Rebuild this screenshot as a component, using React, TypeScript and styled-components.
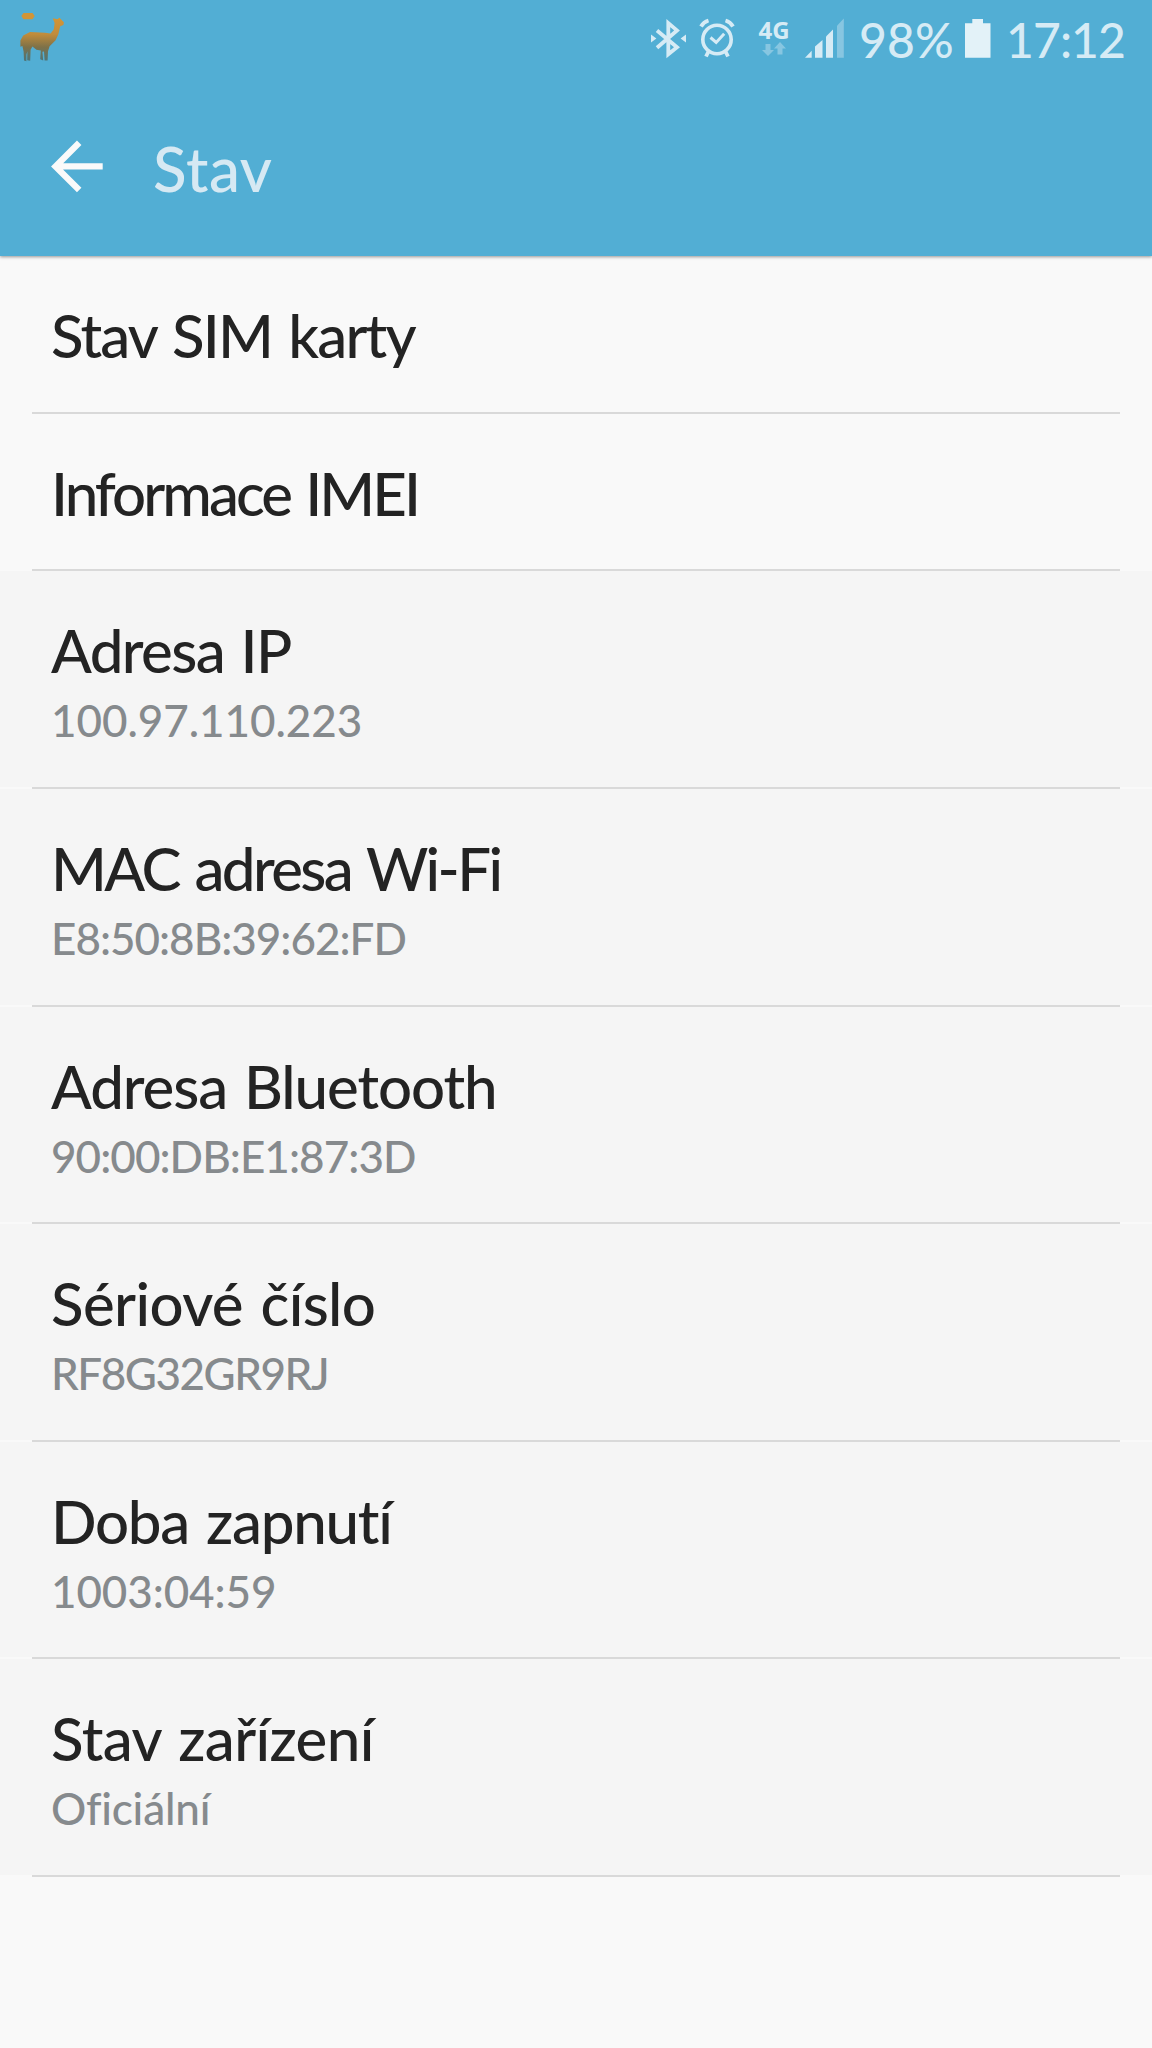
import React from "react";
import styled, { createGlobalStyle } from "styled-components";

const GlobalStyle = createGlobalStyle`
  body {
    margin: 0;
    background: #f9f9f9;
    font-family: Lato, "Open Sans", sans-serif;
    font-weight: 500;
  }
`;

const Screen = styled.div`
  width: 1152px;
  min-height: 2048px;
  background: #f9f9f9;
  overflow: hidden;
`;

const Header = styled.header`
  position: relative;
  height: 256px;
  background: #52aed4;
  box-shadow: 0 1px 3px rgba(0, 0, 0, 0.4);
`;

const StatusBar = styled.div`
  display: flex;
  align-items: flex-start;
  justify-content: space-between;
  height: 62px;
  padding: 10px 25px 0 18px;
  box-sizing: border-box;
  color: #d6ebf5;
`;

const StatusGroup = styled.div`
  display: flex;
  align-items: flex-start;
  padding-top: 8px;
`;

const Glyph = styled.svg<{ $w: number; $h?: number; $gap?: number }>`
  display: block;
  flex: none;
  width: ${(p) => p.$w}px;
  height: ${(p) => p.$h ?? 42}px;
  margin-left: ${(p) => p.$gap ?? 0}px;
`;

const StatusText = styled.span<{ $w: number; $gap: number; $spacing: number }>`
  width: ${(p) => p.$w}px;
  margin-left: ${(p) => p.$gap}px;
  font-size: 48px;
  line-height: 43px;
  letter-spacing: ${(p) => p.$spacing}px;
  white-space: nowrap;
`;

const Network = styled.div`
  display: flex;
  flex-direction: column;
  align-items: center;
  width: 34px;
  margin-left: 22px;
`;

const NetworkLabel = styled.span`
  font: 700 24px/24px "Open Sans", sans-serif;
`;

const ActionBar = styled.div`
  display: flex;
  align-items: center;
  height: 194px;
  padding: 0 0 0 50px;
  box-sizing: border-box;
`;

const BackButton = styled.button`
  display: block;
  padding: 0;
  border: 0;
  background: none;
  margin: 15px 0 0 0;
`;

const PageTitle = styled.h1`
  margin: 18px 0 0 49px;
  font-size: 62px;
  line-height: 74px;
  font-weight: 500;
  letter-spacing: 0.6px;
  color: #d6e9f3;
`;

const Row = styled.section<{ $height: number }>`
  display: flex;
  flex-direction: column;
  height: ${(p) => p.$height}px;
`;

const RowBody = styled.div<{ $muted?: boolean }>`
  flex: 1;
  padding: 43px 51px 0;
  background: ${(p) => (p.$muted ? "#f5f5f5" : "#f9f9f9")};
`;

const RowTitle = styled.div<{ $spacing: number }>`
  font-size: 60px;
  line-height: 72px;
  letter-spacing: ${(p) => p.$spacing}px;
  word-spacing: 3px;
  white-space: nowrap;
  color: #232323;
`;

const RowValue = styled.div<{ $spacing: number }>`
  margin-top: 8px;
  font-size: 44px;
  line-height: 52px;
  letter-spacing: ${(p) => p.$spacing}px;
  white-space: nowrap;
  color: #868a8d;
`;

const Divider = styled.div`
  height: 2px;
  margin: 0 32px;
  background: #d9d9d9;
`;

type Item = {
  title: string;
  titleSpacing: number;
  height: number;
  value?: string;
  valueSpacing?: number;
};

const items: Item[] = [
  { title: "Stav SIM karty", titleSpacing: -1.85, height: 158 },
  { title: "Informace IMEI", titleSpacing: -2.95, height: 157 },
  { title: "Adresa IP", titleSpacing: -1.6, height: 218, value: "100.97.110.223", valueSpacing: -0.05 },
  { title: "MAC adresa Wi-Fi", titleSpacing: -2.6, height: 218, value: "E8:50:8B:39:62:FD", valueSpacing: -1 },
  { title: "Adresa Bluetooth", titleSpacing: -1.1, height: 217, value: "90:00:DB:E1:87:3D", valueSpacing: -0.94 },
  { title: "Sériové číslo", titleSpacing: -0.6, height: 218, value: "RF8G32GR9RJ", valueSpacing: -1.45 },
  { title: "Doba zapnutí", titleSpacing: -1.25, height: 217, value: "1003:04:59", valueSpacing: -0.1 },
  { title: "Stav zařízení", titleSpacing: -0.6, height: 218, value: "Oficiální", valueSpacing: -0.2 },
];

const Llama = () => (
  <Glyph $w={50} $h={52} viewBox="18 10 50 52">
    <defs>
      <linearGradient id="fur" x1="0" y1="17" x2="0" y2="60" gradientUnits="userSpaceOnUse">
        <stop offset="0" stopColor="#d69633" />
        <stop offset="0.4" stopColor="#c08c3b" />
        <stop offset="0.7" stopColor="#7e7148" />
        <stop offset="1" stopColor="#4f7476" />
      </linearGradient>
    </defs>
    <path d="M23.5 13h9l2.2 3-2.2 3.2h-9L21.3 16z" fill="#d19537" />
    <path
      d="M52.7 18.3l4.8.9 2-1.4 1.6 1.6 2.8 2.8-.5 2.8-3.2 1.2-1.8 8-2.8 6-6 6-1.6 5-.4 9.4h-3l-.6-9-1.6.2.8 8.800-3-1.400.6-8.600-4.400-.8-4-3.400-1.800 3.400-.4 11-3-.6.2-9-1 3.400v6.600l-2.400-.8-.4-9-1.200-5.400-2 .8v-6.200l2.800-5.200 6.800-3.400 15 .8 5.600.6 3.200-4.200.8-6.200z"
      fill="url(#fur)"
    />
  </Glyph>
);

const Bluetooth = () => (
  <Glyph $w={36} viewBox="652 18 36 42">
    <path
      d="M658 30.5L678 47.3L669.3 54.2V23L678 30.4L658 47.7"
      fill="none"
      stroke="currentColor"
      strokeWidth="3.8"
    />
    <path d="M652 34.5v8l5.4-4zM687 34.5v8l-5.4-4z" fill="currentColor" />
  </Glyph>
);

const Alarm = () => (
  <Glyph $w={36} $gap={12} viewBox="700 18 36 42" fill="none" stroke="currentColor">
    <circle cx="718" cy="39.5" r="14.2" strokeWidth="3.6" />
    <path d="M702 26.5q2.5-4.5 7.5-6M734 26.5q-2.5-4.5-7.5-6" strokeWidth="3.8" />
    <path d="M709.5 51.5l-2.5 5M726.5 51.5l2.5 5" strokeWidth="3.8" />
    <path d="M711.5 37.5l5.7 5 8-8.7" strokeWidth="3" />
  </Glyph>
);

const Signal = () => (
  <Glyph $w={40} $gap={14} viewBox="805 18 40 42" fill="currentColor">
    <path d="M805 57.7h6.7v-7z" />
    <path d="M815 57.7h7.5V40l-7.5 6.5z" />
    <path d="M826 57.7h7V29.5l-7 7z" />
    <path d="M837 57.7h6.800V18.500l-6.800 7.200z" opacity="0.4" />
  </Glyph>
);

export default function App() {
  return (
    <Screen>
      <GlobalStyle />
      <Header>
        <StatusBar>
          <Llama />
          <StatusGroup>
            <Bluetooth />
            <Alarm />
            <Network>
              <NetworkLabel>4G</NetworkLabel>
              <Glyph $w={24} $h={15} viewBox="0 0 24 15" fill="currentColor" opacity="0.4">
                <path d="M3.5 2h5v6H12L6 14 0 8h3.5z" />
                <path d="M15.5 12.5h5v-6H24L18 0l-6 6.500h3.500z" />
              </Glyph>
            </Network>
            <Signal />
            <StatusText $w={91} $gap={14} $spacing={0.1}>98%</StatusText>
            <Glyph $w={26} $gap={15} viewBox="965 18 26 42" fill="#e3f2f8">
              <path d="M965 23.3h7.3V19h10.7v4.3h7.500v34.400H965z" />
            </Glyph>
            <StatusText $w={121} $gap={15} $spacing={-0.9}>17:12</StatusText>
          </StatusGroup>
        </StatusBar>
        <ActionBar>
          <BackButton aria-label="Zpět">
            <Glyph $w={54} $h={54} viewBox="50 140 54 54">
              <path
                d="M102.7 166.4H57M79.2 142.7L55.5 166.4L79.2 190.1"
                fill="none"
                stroke="#fafafa"
                strokeWidth="6.3"
              />
            </Glyph>
          </BackButton>
          <PageTitle>Stav</PageTitle>
        </ActionBar>
      </Header>
      <main>
        {items.map((item) => (
          <Row key={item.title} $height={item.height}>
            <RowBody $muted={Boolean(item.value)}>
              <RowTitle $spacing={item.titleSpacing}>{item.title}</RowTitle>
              {item.value && <RowValue $spacing={item.valueSpacing ?? 0}>{item.value}</RowValue>}
            </RowBody>
            <Divider />
          </Row>
        ))}
      </main>
    </Screen>
  );
}
